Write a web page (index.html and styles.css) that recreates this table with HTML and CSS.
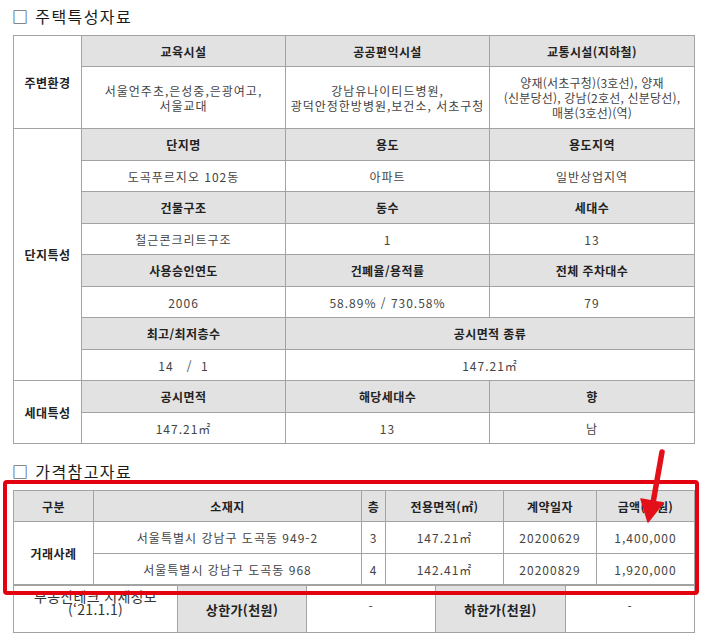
FILE: index.html
```html
<!DOCTYPE html>
<html lang="ko">
<head>
<meta charset="utf-8">
<link rel="stylesheet" href="styles.css">
</head>
<body>
<div class="page">
  <h2 class="title title-first">□ 주택특성자료</h2>
  <table class="grid grid-house">
    <colgroup><col class="c68"><col class="c204"><col class="c204"><col class="c205"></colgroup>
    <tr class="ra"><th class="side" rowspan="2">주변환경</th><th>교육시설</th><th>공공편익시설</th><th>교통시설(지하철)</th></tr>
    <tr class="rtall"><td>서울언주초,은성중,은광여고,<br>서울교대</td><td>강남유나이티드병원,<br>광덕안정한방병원,보건소, 서초구청</td><td class="tight">양재(서초구청)(3호선), 양재<br>(신분당선), 강남(2호선, 신분당선),<br>매봉(3호선)(역)</td></tr>
    <tr class="rh"><th class="side" rowspan="8">단지특성</th><th>단지명</th><th>용도</th><th>용도지역</th></tr>
    <tr class="rd"><td>도곡푸르지오 102동</td><td>아파트</td><td>일반상업지역</td></tr>
    <tr class="rh"><th>건물구조</th><th>동수</th><th>세대수</th></tr>
    <tr class="rd"><td>철근콘크리트구조</td><td>1</td><td>13</td></tr>
    <tr class="rh"><th>사용승인연도</th><th>건폐율/용적률</th><th>전체 주차대수</th></tr>
    <tr class="rd"><td>2006</td><td>58.89% / 730.58%</td><td>79</td></tr>
    <tr class="rh"><th>최고/최저층수</th><th colspan="2">공시면적 종류</th></tr>
    <tr class="rd"><td>14 &nbsp; / &nbsp;1</td><td colspan="2">147.21㎡</td></tr>
    <tr class="rh"><th class="side" rowspan="2">세대특성</th><th>공시면적</th><th>해당세대수</th><th>향</th></tr>
    <tr class="rd"><td>147.21㎡</td><td>13</td><td>남</td></tr>
  </table>

  <h2 class="title title-second">□ 가격참고자료</h2>
  <table class="grid grid-price">
    <colgroup><col class="c80"><col class="c268"><col class="c24"><col class="c118"><col class="c93"><col class="c98"></colgroup>
    <tr class="ra"><th>구분</th><th>소재지</th><th>층</th><th>전용면적(㎡)</th><th>계약일자</th><th>금액(천원)</th></tr>
    <tr class="rh"><th class="side" rowspan="2">거래사례</th><td>서울특별시 강남구 도곡동 949-2</td><td>3</td><td>147.21㎡</td><td>20200629</td><td>1,400,000</td></tr>
    <tr class="rd"><td>서울특별시 강남구 도곡동 968</td><td>4</td><td>142.41㎡</td><td>20200829</td><td>1,920,000</td></tr>
  </table>
  <table class="grid grid-quote">
    <colgroup><col class="c164"><col class="c129"><col class="c129"><col class="c130"><col class="c129"></colgroup>
    <tr class="rq"><td class="src">부동산테크 시세정보<br>(‘21.1.1)</td><th>상한가(천원)</th><td class="dash">-</td><th>하한가(천원)</th><td class="dash">-</td></tr>
  </table>

  <div class="highlight"></div>
  <svg class="arrow" width="40" height="80" viewBox="630 448 40 80" aria-hidden="true">
    <line x1="662" y1="452" x2="653" y2="503" stroke="#e3101a" stroke-width="5.5" stroke-linecap="round"/>
    <polygon points="648,522 641,499 663,503" fill="#e3101a" stroke="#e3101a" stroke-width="1.5" stroke-linejoin="round"/>
  </svg>
</div>
</body>
</html>
```
FILE: styles.css
```css
html, body {
  margin: 0;
  padding: 0;
  background: #fff;
}
.page {
  position: relative;
  width: 704px;
  height: 637px;
  overflow: hidden;
  font-family: "Noto Sans CJK KR", "Noto Sans", sans-serif;
  color: #444;
}
.title {
  margin: 0 0 0 12px;
  font-size: 16px;
  line-height: 20px;
  font-weight: 400;
  color: #1a1a1a;
  letter-spacing: 1.4px;
}
.title-first { padding-top: 6px; margin-bottom: 9px; }
.title-second { margin-top: 17px; margin-bottom: 9px; }

.grid {
  margin-left: 13px;
  width: 681px;
  border-collapse: collapse;
  table-layout: fixed;
  font-size: 12px;
  line-height: 15px;
}
.grid th, .grid td {
  border: 1px solid #a3a3a3;
  text-align: center;
  vertical-align: middle;
  padding: 0 2px;
  white-space: nowrap;
}
.grid th {
  background: #e2e2e2;
  color: #222;
  font-weight: 700;
  letter-spacing: 0.4px;
}
.grid th.side {
  background: #fff;
}
.grid td {
  color: #444;
  letter-spacing: 1px;
}
.grid td.tight { letter-spacing: 0.2px; }

.c68 { width: 68px; }
.c204 { width: 204px; }
.c205 { width: 205px; }
.c80 { width: 80px; }
.c268 { width: 268px; }
.c24 { width: 24px; }
.c118 { width: 118px; }
.c93 { width: 93px; }
.c98 { width: 98px; }
.c164 { width: 164px; }
.c129 { width: 129px; }
.c130 { width: 130px; }

.ra { height: 31px; }
.rh { height: 32px; }
.rd { height: 31px; }
.rtall { height: 62px; }
.rq { height: 47px; }
.grid-quote .rq th { font-size: 13px; }
.grid-quote td.src {
  vertical-align: top;
  padding-top: 4px;
  font-size: 14px;
  line-height: 13px;
  color: #333;
  letter-spacing: 0.3px;
}
.grid-quote td.dash { vertical-align: top; padding-top: 12px; }

.highlight {
  position: absolute;
  left: 3px;
  top: 480px;
  width: 688px;
  height: 107px;
  border: 4.5px solid #e3000f;
  border-radius: 4px;
}
.arrow {
  position: absolute;
  left: 630px;
  top: 448px;
}
```
